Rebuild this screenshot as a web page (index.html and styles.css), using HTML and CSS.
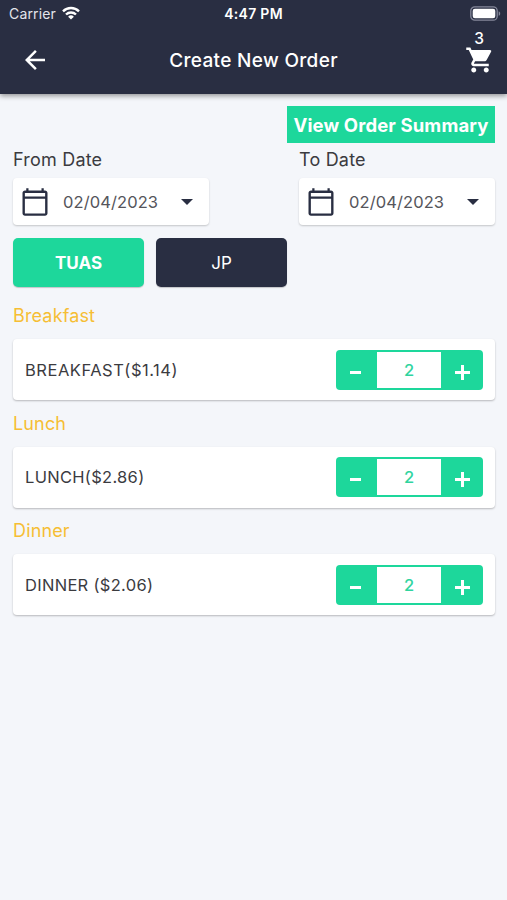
FILE: index.html
```html
<!DOCTYPE html>
<html lang="en">
<head>
<meta charset="utf-8">
<title>Create New Order</title>
<link rel="stylesheet" href="styles.css">
</head>
<body>
<svg class="defs" width="0" height="0" aria-hidden="true">
  <symbol id="calendar" viewBox="0 0 24 24"><path fill-rule="evenodd" d="M20 2.8h-1V1h-1.8v1.8H6.8V1H5v1.8H4c-1.1 0-2 .9-2 2V21c0 1.1.9 2 2 2h16c1.1 0 2-.9 2-2V4.800c0-1.100-.9-2-2-2zM3.900 4.700h16.200v2.900H3.900zM3.900 9.400h16.200v11.700H3.900z"/></symbol>
</svg>
<header class="header">
  <div class="status">
    <div class="carrier"><span>Carrier</span>
      <svg class="wifi" viewBox="0 0 18 14" fill="none" stroke="#fff" stroke-width="2.400"><path d="M1 5.300a11.500 11.500 0 0 1 16 0"/><path d="M4 8.500a7.200 7.200 0 0 1 10 0"/><path d="M9 13.600L6.100 10.700a4.100 4.100 0 0 1 5.800 0z" fill="#fff" stroke="none"/></svg>
    </div>
    <span class="time">4:47 PM</span>
    <svg class="battery" viewBox="0 0 31 15"><rect x=".8" y=".8" width="26.400" height="13.400" rx="4" fill="none" stroke="#85889a" stroke-width="1.300"/><rect x="2.700" y="2.700" width="22.600" height="9.600" rx="2.200" fill="#fff"/><path d="M28.700 5.200c2 .8 2 3.800 0 4.600z" fill="#85889a"/></svg>
  </div>
  <div class="bar">
    <svg class="back" viewBox="0 0 24 24"><path d="M20 11H7.830l5.590-5.590L12 4l-8 8 8 8 1.410-1.410L7.830 13H20z"/></svg>
    <h1 class="title">Create New Order</h1>
    <div class="cart">
      <span class="count">3</span>
      <svg viewBox="0 0 24 24"><path d="M7 18c-1.100 0-1.990.9-1.990 2S5.900 22 7 22s2-.9 2-2-.9-2-2-2zM1 2v2h2l3.600 7.590-1.350 2.450c-.16.280-.25.610-.25.960 0 1.100.9 2 2 2h12v-2H7.420c-.14 0-.25-.11-.25-.25l.03-.12.900-1.630h7.450c.75 0 1.410-.41 1.750-1.030l3.580-6.490A1 1 0 0 0 20 4H5.210l-.94-2H1zm16 16c-1.100 0-1.990.9-1.990 2s.89 2 1.990 2 2-.9 2-2-.9-2-2-2z"/></svg>
    </div>
  </div>
</header>
<main class="content">
  <button class="summary"><span>View Order Summary</span></button>
  <div class="dates">
    <div class="field">
      <span class="label">From Date</span>
      <div class="picker"><svg class="cal"><use href="#calendar"/></svg><span class="date">02/04/2023</span><i class="caret"></i></div>
    </div>
    <div class="field">
      <span class="label">To Date</span>
      <div class="picker"><svg class="cal"><use href="#calendar"/></svg><span class="date">02/04/2023</span><i class="caret"></i></div>
    </div>
  </div>
  <div class="tabs">
    <button class="tab active">TUAS</button>
    <button class="tab">JP</button>
  </div>
  <section class="meal">
    <h2 class="heading">Breakfast</h2>
    <div class="card"><span class="name breakfast">BREAKFAST($1.14)</span>
      <div class="stepper"><button class="minus"></button><span class="qty">2</span><button class="plus"></button></div></div>
  </section>
  <section class="meal">
    <h2 class="heading">Lunch</h2>
    <div class="card"><span class="name">LUNCH($2.86)</span>
      <div class="stepper"><button class="minus"></button><span class="qty">2</span><button class="plus"></button></div></div>
  </section>
  <section class="meal">
    <h2 class="heading">Dinner</h2>
    <div class="card"><span class="name">DINNER ($2.06)</span>
      <div class="stepper"><button class="minus"></button><span class="qty">2</span><button class="plus"></button></div></div>
  </section>
</main>
</body>
</html>
```
FILE: styles.css
```css
* { box-sizing: border-box; }
body {
  margin: 0;
  min-height: 900px;
  background: #f4f6fa;
  color: #3b3b3f;
  font-family: Inter, "Liberation Sans", sans-serif;
}
h1, h2 { margin: 0; }
button { border: 0; padding: 0; font: inherit; color: #fff; }
.defs { display: block; height: 0; }
svg { display: block; flex: none; }
.header {
  height: 94px;
  background: #292e42;
  color: #fff;
  box-shadow: 0 2px 5px rgba(0, 0, 0, .4);
}
.status {
  display: grid;
  grid-template-columns: 1fr auto 1fr;
  align-items: center;
  height: 27px;
  padding: 0 6px;
}
.carrier {
  display: flex;
  align-items: center;
  gap: 6px;
  margin-left: 3px;
  font-size: 14px;
  letter-spacing: .15px;
  color: #e4e5eb;
}
.wifi { width: 18px; height: 14px; margin-top: -1px; }
.time { font-size: 14px; font-weight: 600; letter-spacing: .3px; }
.battery { width: 31px; height: 15px; justify-self: end; }
.bar {
  display: grid;
  grid-template-columns: 1fr auto 1fr;
  align-items: center;
  height: 66px;
  padding: 0 20px;
}
.back { width: 30px; height: 30px; fill: #fff; }
.title { padding-top: 1px; font-size: 19px; font-weight: 500; line-height: 24px; letter-spacing: .33px; }
.cart { justify-self: end; width: 30px; height: 60px; margin-right: -8px; padding-top: 1px; }
.cart svg { width: 30px; height: 30px; margin-top: -2.500px; fill: #fff; }
.count { display: block; text-align: center; padding-right: 2px; font-size: 15.500px; font-weight: 500; line-height: 16px; }
.content { padding: 12px 12px 0 13px; }
.summary {
  display: flex;
  align-items: center;
  justify-content: center;
  width: 208px;
  height: 37px;
  margin-left: auto;
  background: #1dd79b;
  font-size: 18.500px;
  font-weight: 700;
  letter-spacing: .12px;
  white-space: nowrap;
}
.dates { display: flex; justify-content: space-between; margin-top: 5px; }
.field { width: 196px; }
.label { display: block; height: 30px; font-size: 18px; line-height: 24px; letter-spacing: .2px; }
.picker {
  display: flex;
  align-items: center;
  height: 47px;
  padding: 0 16px 0 7px;
  background: #fff;
  border-radius: 4px;
  box-shadow: 0 1px 2px rgba(0, 0, 0, .2);
}
.cal { width: 30px; height: 30px; fill: #292e42; }
.date { margin-left: 13px; font-size: 16.500px; letter-spacing: .1px; color: #55555b; }
.caret {
  margin-left: auto;
  border: 6px solid transparent;
  border-top-color: #292e42;
  border-bottom: 0;
}
.tabs { display: flex; gap: 12px; margin-top: 13px; }
.tab {
  width: 131px;
  height: 49px;
  border-radius: 5px;
  background: #292e42;
  font-size: 17px;
  box-shadow: 0 1px 1px rgba(0, 0, 0, .2);
}
.tab.active { background: #1dd79b; font-weight: 700; }
.meal { height: 107.500px; padding-top: 17px; }
.heading { height: 35px; font-size: 18px; font-weight: 400; line-height: 24px; letter-spacing: .15px; color: #f6be34; }
.card {
  display: flex;
  align-items: center;
  justify-content: space-between;
  height: 61px;
  padding: 0 12px;
  background: #fff;
  border-radius: 4px;
  box-shadow: 0 1px 2px rgba(0, 0, 0, .25);
}
.name { font-size: 16.500px; letter-spacing: .3px; }
.name.breakfast { letter-spacing: .52px; }
.stepper {
  display: grid;
  grid-template-columns: 39px 64px 40px;
  width: 147px;
  height: 40px;
  padding: 2px;
  background: #1dd79b;
  border-radius: 4px;
}
.qty {
  display: flex;
  align-items: center;
  justify-content: center;
  background: #fff;
  color: #30d49e;
  font-size: 16.500px;
  font-weight: 500;
}
.minus, .plus {
  background: linear-gradient(#fff, #fff) 12px 19px / 11px 3px no-repeat;
}
.plus {
  background: linear-gradient(#fff, #fff) 14px 19px / 15px 3px no-repeat,
    linear-gradient(#fff, #fff) 20px 13px / 3px 15px no-repeat;
}
```
